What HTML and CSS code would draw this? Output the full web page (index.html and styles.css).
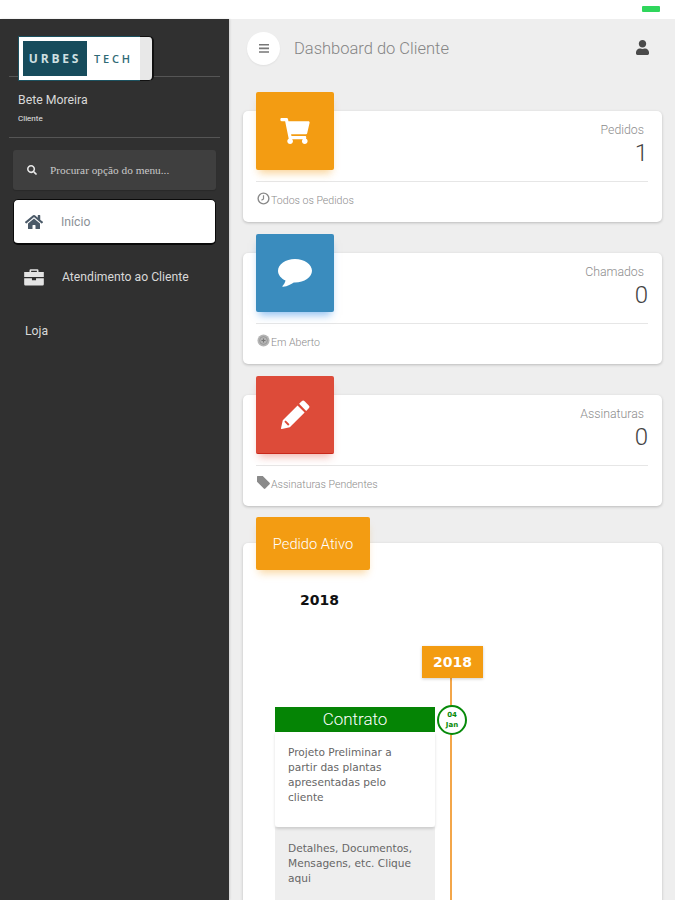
FILE: index.html
```html
<!DOCTYPE html>
<html lang="pt">
<head>
<meta charset="utf-8">
<title>Dashboard do Cliente</title>
<link rel="stylesheet" href="styles.css">
</head>
<body>
<div class="app">
  <div class="statusbar"><span class="battery"></span></div>
  <div class="shell">
    <aside class="sidebar">
      <div class="logo">
        <div class="logo-white">
          <span class="logo-box">URBES</span>
          <span class="logo-tech">TECH</span>
        </div>
        <div class="logo-tab"></div>
      </div>
      <div class="rule rule-logo"></div>
      <div class="profile">
        <div class="profile-name">Bete Moreira</div>
        <div class="profile-role">Cliente</div>
      </div>
      <div class="rule"></div>
      <div class="search">
        <svg class="search-icon" viewBox="0 0 512 512"><path d="M505 442.7L405.3 343c-4.5-4.5-10.6-7-17-7H372c27.6-35.3 44-79.7 44-128C416 93.1 322.9 0 208 0S0 93.1 0 208s93.1 208 208 208c48.3 0 92.7-16.4 128-44v16.3c0 6.4 2.5 12.5 7 17l99.7 99.7c9.4 9.4 24.6 9.4 33.9 0l28.3-28.3c9.4-9.4 9.4-24.6.1-34zM208 336c-70.7 0-128-57.2-128-128 0-70.7 57.2-128 128-128 70.7 0 128 57.2 128 128 0 70.7-57.2 128-128 128z"/></svg>
        <span class="search-text">Procurar opção do menu...</span>
      </div>
      <nav class="menu">
        <a class="menu-item active">
          <svg class="menu-icon home" viewBox="0 0 576 512"><path d="M280.37 148.26L96 300.11V464a16 16 0 0 0 16 16l112.06-.29a16 16 0 0 0 15.92-16V368a16 16 0 0 1 16-16h64a16 16 0 0 1 16 16v95.64a16 16 0 0 0 16 16.05L464 480a16 16 0 0 0 16-16V300L295.67 148.26a12.19 12.19 0 0 0-15.3 0zM571.6 251.47L488 182.56V44.05a12 12 0 0 0-12-12h-56a12 12 0 0 0-12 12v72.61L318.47 43a48 48 0 0 0-61 0L4.34 251.47a12 12 0 0 0-1.6 16.9l25.5 31A12 12 0 0 0 45.15 301l235.22-193.74a12.19 12.19 0 0 1 15.3 0L530.9 301a12 12 0 0 0 16.9-1.6l25.5-31a12 12 0 0 0-1.7-16.93z"/></svg>
          <span>Início</span>
        </a>
        <a class="menu-item">
          <svg class="menu-icon" viewBox="0 0 24 22"><path d="M8 1.5h8A1.5 1.5 0 0 1 17.500 3v2H24v6H0V5h6.500V3A1.500 1.500 0 0 1 8 1.500zM8.500 3.500V5h7V3.500zM0 12.500h9.500V15h5v-2.500H24V20a1.500 1.500 0 0 1-1.500 1.500h-21A1.500 1.500 0 0 1 0 20z"/></svg>
          <span>Atendimento ao Cliente</span>
        </a>
        <a class="menu-item plain"><span>Loja</span></a>
      </nav>
    </aside>
    <main class="main">
      <header class="topbar">
        <button class="round-btn" type="button" aria-label="Menu">
          <svg viewBox="0 0 12 11"><path d="M1 1h10v1.600H1zM1 4.600h10v1.600H1zM1 8.200h10v1.600H1z"/></svg>
        </button>
        <h1 class="title">Dashboard do Cliente</h1>
        <svg class="user-icon" viewBox="0 0 448 512"><path d="M224 256c70.700 0 128-57.300 128-128S294.700 0 224 0 96 57.300 96 128s57.300 128 128 128zm89.600 32h-16.700c-22.200 10.200-46.900 16-72.900 16s-50.600-5.800-72.900-16h-16.700C60.200 288 0 348.200 0 422.400V464c0 26.500 21.500 48 48 48h352c26.500 0 48-21.500 48-48v-41.600c0-74.200-60.200-134.400-134.400-134.400z"/></svg>
      </header>

      <section class="card">
        <div class="card-head">
          <div class="tile orange">
            <svg class="cart" viewBox="0 0 576 512"><path d="M528.120 301.319l47.273-208C578.806 78.301 567.391 64 551.990 64H159.208l-9.166-44.810C147.758 8.021 137.930 0 126.529 0H24C10.745 0 0 10.745 0 24v16c0 13.255 10.745 24 24 24h69.883l70.248 343.435C147.325 417.100 136 435.222 136 456c0 30.928 25.072 56 56 56s56-25.072 56-56c0-15.674-6.447-29.835-16.824-40h209.647C430.447 426.165 424 440.326 424 456c0 30.928 25.072 56 56 56s56-25.072 56-56c0-22.172-12.888-41.332-31.579-50.405l5.517-24.276c3.413-15.018-8.002-29.319-23.403-29.319H218.117l-6.545-32h293.145c11.206 0 20.920-7.754 23.403-18.681z"/></svg>
          </div>
          <div class="stat">
            <div class="stat-label">Pedidos</div>
            <div class="stat-value">1</div>
          </div>
        </div>
        <div class="card-foot">
          <svg class="foot-icon" viewBox="0 0 14 14"><circle cx="7" cy="7" r="5.800" fill="none" stroke="#8a8a8a" stroke-width="1.500"/><path d="M7 3.500V7.500L4.800 9" fill="none" stroke="#8a8a8a" stroke-width="1.300"/></svg>
          <span>Todos os Pedidos</span>
        </div>
      </section>

      <section class="card">
        <div class="card-head">
          <div class="tile blue">
            <svg class="bubble" viewBox="0 0 34 28"><path d="M17 0C7.600 0 0 5.300 0 11.800c0 4.100 3 7.700 7.500 9.800-.4 2.300-1.600 4-3 5.300-.4.400 0 1 .6.900 4.500-.6 8.300-2.500 10.700-4.300.7.100 1.400.1 1.200.1 9.400 0 17-5.300 17-11.800S26.400 0 17 0z"/></svg>
          </div>
          <div class="stat">
            <div class="stat-label">Chamados</div>
            <div class="stat-value">0</div>
          </div>
        </div>
        <div class="card-foot">
          <svg class="foot-icon" viewBox="0 0 14 14"><circle cx="7" cy="7" r="6.500" fill="#b5b5b5"/><circle cx="7" cy="7" r="4.200" fill="none" stroke="#8c8c8c" stroke-width=".8"/><path d="M7 4.800v4.400M4.800 7h4.400" stroke="#777" stroke-width="1.200"/></svg>
          <span>Em Aberto</span>
        </div>
      </section>

      <section class="card">
        <div class="card-head">
          <div class="tile red">
            <svg class="pencil" viewBox="0 0 28 28"><path d="M20 1.200a2 2 0 0 1 2.800 0l4 4a2 2 0 0 1 0 2.800L24.300 10.500 17.500 3.700zM16 5.200l6.800 6.800L8.500 26.300 0.800 28a.7.700 0 0 1-.8-.8l1.700-7.700zM4.500 19.800l-1.300 1.300 3.700 3.700 1.300-1.300z"/></svg>
          </div>
          <div class="stat">
            <div class="stat-label">Assinaturas</div>
            <div class="stat-value">0</div>
          </div>
        </div>
        <div class="card-foot">
          <svg class="foot-icon" viewBox="0 0 14 14"><path d="M0.500 0H6.200L13.500 7.300a1.200 1.200 0 0 1 0 1.700L9 13.500a1.200 1.200 0 0 1-1.700 0L0 6.200V1A1 1 0 0 1 .5 0z" fill="#8a8a8a"/></svg>
          <span>Assinaturas Pendentes</span>
        </div>
      </section>

      <section class="card order">
        <div class="order-tab">Pedido Ativo</div>
        <div class="year-title">2018</div>
        <div class="timeline">
          <div class="year-badge">2018</div>
          <div class="tl-line"></div>
          <article class="event">
            <div class="event-head">Contrato</div>
            <div class="event-body">Projeto Preliminar a partir das plantas apresentadas pelo cliente</div>
            <div class="event-foot">Detalhes, Documentos, Mensagens, etc. Clique aqui</div>
            <div class="event-date"><span>04</span><span>Jan</span></div>
          </article>
        </div>
      </section>
    </main>
  </div>
</div>
</body>
</html>
```

FILE: styles.css
```css
* { box-sizing: border-box; }
html, body { margin: 0; padding: 0; height: 100%; overflow: hidden; }
body { font-family: Roboto, "Liberation Sans", sans-serif; background: #fff; }

.app { width: 675px; height: 900px; display: flex; flex-direction: column; overflow: hidden; }

.statusbar { height: 19px; flex: none; background: #fff; display: flex; justify-content: flex-end; padding: 6px 15px 0 0; }
.battery { width: 18px; height: 6px; background: #2fd65c; border-radius: 1px; }

.shell { flex: 1; display: flex; min-height: 0; }

/* sidebar */
.sidebar { width: 229px; flex: none; background: #303030; padding: 17px 9px 0; display: flex; flex-direction: column; box-shadow: 1px 0 2px rgba(0,0,0,.12); position: relative; z-index: 2; }

.logo { display: flex; width: 136px; height: 45px; margin-left: 9px; position: relative; z-index: 1; }
.logo-white { width: 122px; background: #fff; display: flex; align-items: center; padding-left: 4px; gap: 7px; border: 1px solid #1c5260; border-right: 0; }
.logo-box { width: 64px; height: 35px; flex: none; background: #174c5c; color: #cfe0e2; font: 700 12px/35px "Open Sans", sans-serif; letter-spacing: 2.800px; text-align: center; }
.logo-tech { color: #2f6a76; font: 600 11px "Open Sans", sans-serif; letter-spacing: 2.800px; }
.logo-tab { width: 14px; background: #e8e8e8; border: 1px solid #111; border-left: 0; border-right-width: 2px; border-radius: 0 5px 5px 0; }

.rule { height: 1px; background: #555; flex: none; }
.rule-logo { margin-top: -5px; }

.profile { height: 60px; padding: 16px 0 0 9px; color: #d8d8d8; }
.profile-name { font-size: 12.300px; line-height: 15px; }
.profile-role { font-size: 8px; line-height: 10px; margin-top: 6px; color: #e6e6e6; }

.search { margin: 12px 4px 0; height: 40px; background: #3f3f3f; border-radius: 3px; display: flex; align-items: center; padding-left: 14px; gap: 13px; color: #c9c9c9; box-shadow: 0 1px 1px rgba(0,0,0,.15); }
.search-icon { width: 10px; height: 10px; fill: #e8e8e8; }
.search-text { font: 11.300px "Liberation Serif", serif; }

.menu { display: flex; flex-direction: column; margin: 9px 4px 0; }
.menu-item { height: 54px; display: flex; align-items: center; padding-left: 11px; gap: 18px; color: #d8d8d8; font-size: 12.200px; }
.menu-item.active { height: 46px; margin-bottom: 5px; background: #fff; color: #8b9096; border-radius: 5px; border: 1px solid #0a0a0a; border-bottom-width: 2px; padding-left: 10px; gap: 17px; }
.menu-item.plain { padding-left: 12px; }
.menu-icon { width: 20px; height: 18px; fill: #e4e4e4; flex: none; }
.menu-icon.home { fill: #4b5a68; height: 16px; }

/* main */
.main { flex: 1; min-width: 0; background: #eee; padding: 13px 13px 0 14px; overflow: hidden; }

.topbar { display: flex; align-items: center; height: 33px; padding: 0 13px 0 4px; }
.round-btn { width: 33px; height: 33px; border: 0; padding: 0; border-radius: 50%; background: #fff; display: flex; align-items: center; justify-content: center; box-shadow: 0 1px 2px rgba(0,0,0,.06); }
.round-btn svg { width: 12px; height: 11px; fill: #777; }
.title { margin: 0 0 0 14px; font-size: 16.500px; font-weight: 300; color: #858585; flex: 1; }
.user-icon { width: 13px; height: 15px; fill: #4a4a4a; margin-top: -3px; }

.card { background: #fff; border-radius: 5px; box-shadow: 0 1px 3px rgba(0,0,0,.22); padding: 0 14px 0 13px; margin-bottom: 31px; }
.topbar + .card { margin-top: 46px; }

.card-head { display: flex; justify-content: space-between; height: 71px; border-bottom: 1px solid #e6e6e6; }
.tile { width: 78px; height: 78px; flex: none; margin-top: -19px; border-radius: 2px; display: flex; align-items: center; justify-content: center; position: relative; }
.orange { background: #f39c12; box-shadow: 0 6px 8px -3px rgba(243,156,18,.45); }
.blue { background: #3a8cbe; box-shadow: 0 6px 8px -3px rgba(30,130,230,.5); }
.red { background: #dd4b39; box-shadow: 0 6px 8px -3px rgba(221,75,57,.4); border-bottom: 1px solid #c9281a; }
.cart { width: 30px; height: 26px; fill: #fff; }
.bubble { width: 34px; height: 28px; fill: #fff; }
.pencil { width: 29px; height: 29px; fill: #fff; }

.stat { text-align: right; padding-top: 11px; }
.stat-label { font-size: 12.300px; line-height: 16px; font-weight: 300; color: #8c8c8c; padding-right: 4px; }
.stat-value { font-size: 24px; line-height: 28px; font-weight: 300; color: #444; margin-top: 1px; }

.card-foot { height: 40px; display: flex; align-items: center; gap: 1px; font-size: 10.600px; font-weight: 300; color: #8c8c8c; padding-left: 1px; padding-bottom: 4px; }
.foot-icon { width: 13px; height: 13px; flex: none; margin-top: -3px; }

/* order card */
.card:has(+ .order) { margin-bottom: 37px; }
.order { display: flow-root; height: 500px; margin-bottom: 0; padding: 0; }
.order-tab { width: 114px; height: 53px; margin: -26px 0 0 13px; background: #f39c12; color: #fff; font-size: 14.700px; font-weight: 300; border-radius: 2px; display: flex; align-items: center; justify-content: center; position: relative; box-shadow: 0 6px 8px -3px rgba(243,156,18,.4); }
.year-title { margin: 21px 0 0 57px; font: 700 14px/18px "DejaVu Sans", sans-serif; color: #111; }

.timeline { position: relative; padding: 37px 0 0 32px; }
.year-badge { width: 61px; height: 32px; margin-left: 147px; background: #f39c12; color: #fff; font: 700 14px/32px "DejaVu Sans", sans-serif; text-align: center; position: relative; z-index: 1; box-shadow: 0 1px 3px rgba(0,0,0,.2); }
.tl-line { position: absolute; left: 207px; top: 60px; width: 2px; height: 300px; background: #f3a64a; }

.event { position: relative; width: 160px; margin-top: 29px; }
.event-head { height: 25px; background: #058405; color: #fff; font-size: 17px; font-weight: 300; line-height: 25px; text-align: center; }
.event-body { height: 95px; background: #fff; padding: 13px 13px 0; font: 10.600px/15px "DejaVu Sans", sans-serif; color: #666; border-radius: 0 0 3px 3px; box-shadow: 0 2px 3px rgba(0,0,0,.14); position: relative; }
.event-foot { height: 100px; background: #eee; padding: 14px 13px 0; font: 10.600px/15px "DejaVu Sans", sans-serif; color: #666; }
.event-date { position: absolute; left: 162px; top: -2px; width: 30px; height: 30px; border-radius: 50%; background: #fff; border: 2px solid #078a0a; color: #078a0a; display: flex; flex-direction: column; align-items: center; justify-content: center; font: 700 7px/10px "DejaVu Sans", sans-serif; }
```
